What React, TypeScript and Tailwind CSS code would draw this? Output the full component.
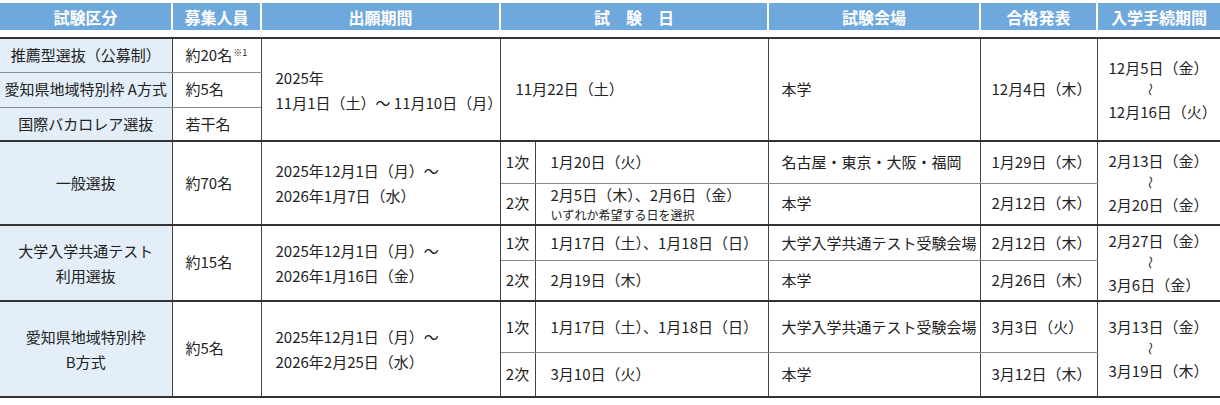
const font = "font-['Noto_Sans_CJK_JP','Noto_Sans',sans-serif]"

// thin horizontals are lighter than the verticals
const cell = 'border-x border-x-[#444] border-y border-y-[#8a8a8a] p-0 align-middle font-normal'
const lead = 'bg-[#e3eef9] text-center border-l-0'
const last = 'border-r-0'

function Tilde() {
  return (
    <div className="pl-[36px] h-[22px] flex items-center">
      <span className="inline-block rotate-90 text-[13px] leading-none">〜</span>
    </div>
  )
}

function Period({ from, to }: { from: string; to: string }) {
  return (
    <div className="pl-[11px] leading-[22px]">
      <div>{from}</div>
      <Tilde />
      <div>{to}</div>
    </div>
  )
}

const headers = ['試験区分', '募集人員', '出願期間', '試　験　日', '試験会場', '合格発表', '入学手続期間']

export default function App() {
  return (
    <div className={`w-[1220px] h-[405px] bg-white pt-[3px] text-[#222] ${font}`}>
      <div className="grid grid-cols-[171px_87px_237px_266px_210px_115px_122px] gap-x-[2px] h-[27px]">
        {headers.map(h => (
          <div key={h} className="bg-[#6fa8dc] text-white font-bold text-[16px] flex items-center justify-center">
            {h}
          </div>
        ))}
      </div>

      <table className="mt-[7px] w-[1220px] table-fixed border-collapse text-[15px]">
        <colgroup>
          <col className="w-[172px]" />
          <col className="w-[89px]" />
          <col className="w-[239px]" />
          <col className="w-[35px]" />
          <col className="w-[233px]" />
          <col className="w-[212px]" />
          <col className="w-[117px]" />
          <col className="w-[123px]" />
        </colgroup>
        <tbody className="border-b-2 border-b-[#333]">
          {/* 推薦型 etc. */}
          <tr className="h-[34px] border-t-2 border-t-[#333]">
            <td className={`${cell} ${lead}`}>推薦型選抜（公募制）</td>
            <td className={`${cell} pl-[13px]`}>
              約20名<span className="text-[9px] leading-none align-[5px] ml-[1px]">※1</span>
            </td>
            <td rowSpan={3} className={`${cell} pl-[14px] leading-[25px]`}>
              <div>2025年</div>
              <div>11月1日（土）〜 11月10日（月）</div>
            </td>
            <td rowSpan={3} colSpan={2} className={`${cell} pl-[15px]`}>11月22日（土）</td>
            <td rowSpan={3} className={`${cell} pl-[13px]`}>本学</td>
            <td rowSpan={3} className={`${cell} pl-[11px]`}>12月4日（木）</td>
            <td rowSpan={3} className={`${cell} ${last}`}>
              <Period from="12月5日（金）" to="12月16日（火）" />
            </td>
          </tr>
          <tr className="h-[35px]">
            <td className={`${cell} ${lead}`}>愛知県地域特別枠 A方式</td>
            <td className={`${cell} pl-[13px]`}>約5名</td>
          </tr>
          <tr className="h-[34px]">
            <td className={`${cell} ${lead}`}>国際バカロレア選抜</td>
            <td className={`${cell} pl-[13px]`}>若干名</td>
          </tr>

          {/* 一般選抜 */}
          <tr className="h-[42px] border-t-2 border-t-[#333]">
            <td rowSpan={2} className={`${cell} ${lead}`}>一般選抜</td>
            <td rowSpan={2} className={`${cell} pl-[13px]`}>約70名</td>
            <td rowSpan={2} className={`${cell} pl-[14px] leading-[25px]`}>
              <div>2025年12月1日（月）〜</div>
              <div>2026年1月7日（水）</div>
            </td>
            <td className={`${cell} text-center`}>1次</td>
            <td className={`${cell} pl-[15px]`}>1月20日（火）</td>
            <td className={`${cell} pl-[13px]`}>名古屋・東京・大阪・福岡</td>
            <td className={`${cell} pl-[11px]`}>1月29日（木）</td>
            <td rowSpan={2} className={`${cell} ${last}`}>
              <Period from="2月13日（金）" to="2月20日（金）" />
            </td>
          </tr>
          <tr className="h-[41px]">
            <td className={`${cell} text-center`}>2次</td>
            <td className={`${cell} pl-[15px]`}>
              <div className="leading-[22px]">2月5日（木）、2月6日（金）</div>
              <div className="text-[12px] leading-[18px]">いずれか希望する日を選択</div>
            </td>
            <td className={`${cell} pl-[13px]`}>本学</td>
            <td className={`${cell} pl-[11px]`}>2月12日（木）</td>
          </tr>

          {/* 共通テスト利用 */}
          <tr className="h-[36px] border-t-2 border-t-[#333]">
            <td rowSpan={2} className={`${cell} ${lead} leading-[25px]`}>
              <div>大学入学共通テスト</div>
              <div>利用選抜</div>
            </td>
            <td rowSpan={2} className={`${cell} pl-[13px]`}>約15名</td>
            <td rowSpan={2} className={`${cell} pl-[14px] leading-[25px]`}>
              <div>2025年12月1日（月）〜</div>
              <div>2026年1月16日（金）</div>
            </td>
            <td className={`${cell} text-center`}>1次</td>
            <td className={`${cell} pl-[15px]`}>1月17日（土）、1月18日（日）</td>
            <td className={`${cell} pl-[13px]`}>大学入学共通テスト受験会場</td>
            <td className={`${cell} pl-[11px]`}>2月12日（木）</td>
            <td rowSpan={2} className={`${cell} ${last}`}>
              <Period from="2月27日（金）" to="3月6日（金）" />
            </td>
          </tr>
          <tr className="h-[40px]">
            <td className={`${cell} text-center`}>2次</td>
            <td className={`${cell} pl-[15px]`}>2月19日（木）</td>
            <td className={`${cell} pl-[13px]`}>本学</td>
            <td className={`${cell} pl-[11px]`}>2月26日（木）</td>
          </tr>

          {/* 地域特別枠 B */}
          <tr className="h-[52px] border-t-2 border-t-[#333]">
            <td rowSpan={2} className={`${cell} ${lead} leading-[25px]`}>
              <div>愛知県地域特別枠</div>
              <div>B方式</div>
            </td>
            <td rowSpan={2} className={`${cell} pl-[13px]`}>約5名</td>
            <td rowSpan={2} className={`${cell} pl-[14px] leading-[25px]`}>
              <div>2025年12月1日（月）〜</div>
              <div>2026年2月25日（水）</div>
            </td>
            <td className={`${cell} text-center`}>1次</td>
            <td className={`${cell} pl-[15px]`}>1月17日（土）、1月18日（日）</td>
            <td className={`${cell} pl-[13px]`}>大学入学共通テスト受験会場</td>
            <td className={`${cell} pl-[11px]`}>3月3日（火）</td>
            <td rowSpan={2} className={`${cell} ${last}`}>
              <Period from="3月13日（金）" to="3月19日（木）" />
            </td>
          </tr>
          <tr className="h-[44px]">
            <td className={`${cell} text-center`}>2次</td>
            <td className={`${cell} pl-[15px]`}>3月10日（火）</td>
            <td className={`${cell} pl-[13px]`}>本学</td>
            <td className={`${cell} pl-[11px]`}>3月12日（木）</td>
          </tr>
        </tbody>
      </table>
    </div>
  )
}
